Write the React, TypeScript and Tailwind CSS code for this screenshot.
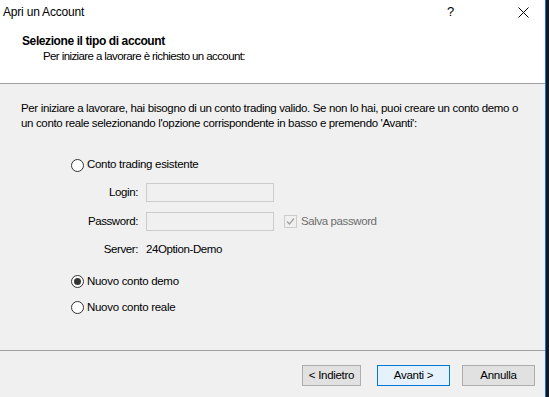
import React from 'react'

const font = { fontFamily: '"Liberation Sans", Arial, sans-serif' }

function Radio({ checked, label }: { checked?: boolean; label: string }){
  return (
    <div className="flex items-center h-[16px]">
      <span className="w-[13px] h-[13px] rounded-full border border-[#333] bg-white flex items-center justify-center">
        {checked && <span className="w-[7px] h-[7px] rounded-full bg-[#333]" />}
      </span>
      <span className="ml-[3px] text-[11.5px] tracking-[-0.3px] text-black">{label}</span>
    </div>
  )
}

function Btn({ label, primary }: { label: string; primary?: boolean }){
  return (
    <button className={`h-[21px] text-[11.5px] tracking-[-0.3px] text-black border ${primary ? 'bg-[#e5f1fb] border-[#0078d7]' : 'bg-[#e1e1e1] border-[#adadad]'}`}>
      {label}
    </button>
  )
}

export default function App(){
  return (
    <div className="w-[549px] h-[397px] bg-[#101828] flex" style={font}>
      <div className="w-[546px] h-full bg-[#f0f0f0] border-r border-[#1c6fc4] flex flex-col">
        {/* header */}
        <div className="h-[84px] bg-white border-b border-[#a0a0a0]">
          <div className="flex items-center h-[24px] pl-[3px] text-[12px] tracking-[-0.2px] text-black">
            <span>Apri un Account</span>
            <span className="ml-auto w-[15px] text-center text-[13px]">?</span>
            <span className="ml-[60px] mr-[16px]">
              <svg width="11" height="11" viewBox="0 0 11 11"><path d="M0.5 0.5 L10.5 10.5 M10.5 0.5 L0.5 10.5" stroke="#000" strokeWidth="1" /></svg>
            </span>
          </div>
          <div className="pl-[22px] pt-[10px] text-[12px] tracking-[-0.4px] font-bold text-black leading-[15px]">Selezione il tipo di account</div>
          <div className="pl-[43px] text-[11.5px] tracking-[-0.6px] text-black leading-[15px]">Per iniziare a lavorare è richiesto un account:</div>
        </div>

        {/* body */}
        <div className="flex-1 flex flex-col text-[11.5px] tracking-[-0.4px]">
          <div className="pl-[21px] pt-[17px] text-black leading-[15px] whitespace-nowrap tracking-[-0.35px]">
            Per iniziare a lavorare, hai bisogno di un conto trading valido. Se non lo hai, puoi creare un conto demo o<br />
            un conto reale selezionando l'opzione corrispondente in basso e premendo 'Avanti':
          </div>

          <div className="pl-[71px] pt-[26px]">
            <Radio label="Conto trading esistente" />
          </div>

          <div className="grid grid-cols-[67px_auto] items-center gap-x-[8px] gap-y-[10px] pl-[71px] mt-[10px]">
            <span className="text-right text-black">Login:</span>
            <span className="w-[128px] h-[19px] border border-[#cccccc] bg-[#f0f0f0]" />
            <span className="text-right text-black">Password:</span>
            <div className="flex items-center">
              <span className="w-[128px] h-[19px] border border-[#cccccc] bg-[#f0f0f0]" />
              <span className="ml-[10px] w-[13px] h-[13px] border border-[#cccccc] bg-[#f0f0f0] flex items-center justify-center">
                <svg width="9" height="9" viewBox="0 0 9 9"><path d="M1 4.5 L3.5 7 L8 1.5" fill="none" stroke="#a0a0a0" strokeWidth="1.2" /></svg>
              </span>
              <span className="ml-[4px] text-[#6d6d6d]">Salva password</span>
            </div>
            <span className="text-right text-black">Server:</span>
            <span className="text-black">24Option-Demo</span>
          </div>

          <div className="pl-[71px] pt-[15px]">
            <Radio checked label="Nuovo conto demo" />
          </div>
          <div className="pl-[71px] pt-[10px]">
            <Radio label="Nuovo conto reale" />
          </div>
        </div>

        {/* footer */}
        <div className="h-[47px] border-t border-[#a0a0a0] flex items-start pt-[14px] pl-[302px]">
          <div className="w-[59px] grid"><Btn label="< Indietro" /></div>
          <div className="w-[73px] grid ml-[16px]"><Btn primary label="Avanti >" /></div>
          <div className="w-[73px] grid ml-[12px]"><Btn label="Annulla" /></div>
        </div>
      </div>
    </div>
  )
}
